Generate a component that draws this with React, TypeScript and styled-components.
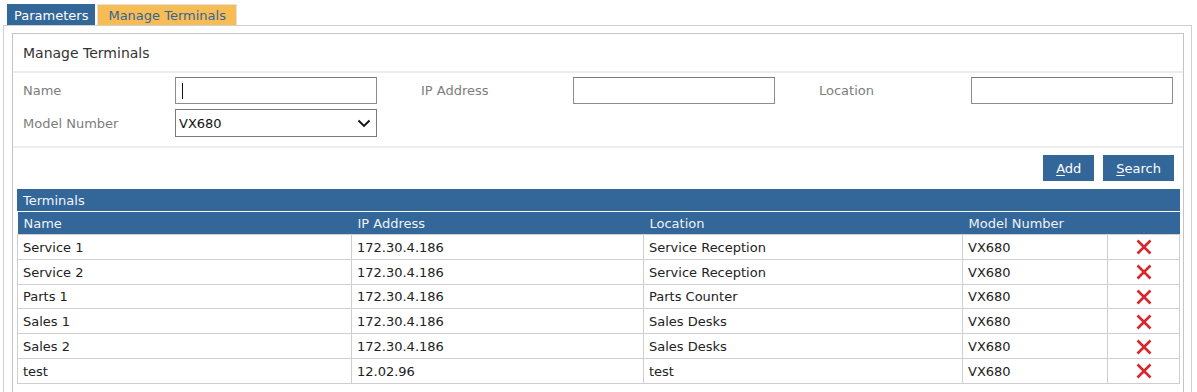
import styled, { createGlobalStyle } from 'styled-components';

const GlobalStyle = createGlobalStyle`
  body {
    margin: 0;
    background: #fff;
    font-family: Tahoma, 'DejaVu Sans', sans-serif;
    font-size: 13px;
    color: #222;
  }
`;

const BLUE = '#336699';

interface ITerminal {
  name: string;
  ip: string;
  location: string;
  model: string;
}

const terminals: ITerminal[] = [
  { name: 'Service 1', ip: '172.30.4.186', location: 'Service Reception', model: 'VX680' },
  { name: 'Service 2', ip: '172.30.4.186', location: 'Service Reception', model: 'VX680' },
  { name: 'Parts 1', ip: '172.30.4.186', location: 'Parts Counter', model: 'VX680' },
  { name: 'Sales 1', ip: '172.30.4.186', location: 'Sales Desks', model: 'VX680' },
  { name: 'Sales 2', ip: '172.30.4.186', location: 'Sales Desks', model: 'VX680' },
  { name: 'test', ip: '12.02.96', location: 'test', model: 'VX680' },
];

const DeleteIcon = () => (
  <svg width='16' height='16' viewBox='0 0 16 16'>
    <path d='M1.5 1.5 L14.5 14.5 M14.5 1.5 L1.5 14.5' stroke='#d7262c' strokeWidth='2.6' />
  </svg>
);

const App = () => {
  return (
    <Page>
      <GlobalStyle />
      <Tabs>
        <Tab>Parameters</Tab>
        <Tab $active>Manage Terminals</Tab>
      </Tabs>
      <Outer>
        <Inner>
          <Title>Manage Terminals</Title>
          <Form>
            <Field>
              <label>Name</label>
              <Caret>
                <input type='text' />
              </Caret>
            </Field>
            <Field>
              <label>IP Address</label>
              <input type='text' />
            </Field>
            <Field>
              <label>Location</label>
              <input type='text' />
            </Field>
            <Field>
              <label>Model Number</label>
              <Select>
                <span>VX680</span>
                <svg width='14' height='9' viewBox='0 0 14 9'>
                  <path d='M1.5 1.5 L7 7 L12.5 1.5' fill='none' stroke='#111' strokeWidth='1.8' />
                </svg>
              </Select>
            </Field>
          </Form>
          <Actions>
            <Button>
              <u>A</u>dd
            </Button>
            <Button>
              <u>S</u>earch
            </Button>
          </Actions>
          <Grid>
            <GridTitle>Terminals</GridTitle>
            <Table>
              <colgroup>
                <col style={{ width: 334 }} />
                <col style={{ width: 292 }} />
                <col style={{ width: 319 }} />
                <col style={{ width: 145 }} />
                <col />
              </colgroup>
              <thead>
                <tr>
                  <th>Name</th>
                  <th>IP Address</th>
                  <th>Location</th>
                  <th>Model Number</th>
                  <th />
                </tr>
              </thead>
              <tbody>
                {terminals.map(t => (
                  <tr key={t.name}>
                    <td>{t.name}</td>
                    <td>{t.ip}</td>
                    <td>{t.location}</td>
                    <td>{t.model}</td>
                    <td className='del'>
                      <DeleteIcon />
                    </td>
                  </tr>
                ))}
              </tbody>
            </Table>
          </Grid>
        </Inner>
      </Outer>
    </Page>
  );
};

const Page = styled.div`
  padding: 4px 5px 0 3px;
  height: 388px;
  overflow: hidden;
`;

const Tabs = styled.div`
  display: flex;
  gap: 2px;
  padding-left: 4px;
`;

const Tab = styled.div<{ $active?: boolean }>`
  height: 21px;
  line-height: 21px;
  padding: 0 ${p => (p.$active ? 10 : 6)}px;
  font-size: 13px;
  box-sizing: border-box;
  background: ${p => (p.$active ? '#f8bc55' : BLUE)};
  color: ${p => (p.$active ? BLUE : '#fff')};
  border: 1px solid ${p => (p.$active ? '#e2e2e2' : BLUE)};
  border-bottom: none;
`;

const Outer = styled.div`
  border: 1px solid #d0d0d0;
  border-bottom: none;
  padding: 7px 7px 0 8px;
  height: 400px;
`;

const Inner = styled.div`
  border: 1px solid #c4c4c4;
  border-bottom: none;
  padding: 0 3px 0 4px;
  height: 400px;
`;

const Title = styled.div`
  font-size: 14px;
  color: #333;
  padding: 11px 6px 0 10px;
  height: 26px;
  border-bottom: 2px solid #ececec;
  margin: 0 -3px 0 -4px;
`;

const Form = styled.div`
  display: grid;
  grid-template-columns: repeat(3, 398px);
  row-gap: 5px;
  padding: 4px 0 9px 10px;
  border-bottom: 2px solid #ececec;
  margin: 0 -3px 0 -4px;
`;

const Field = styled.div`
  display: flex;
  align-items: center;
  label {
    width: 152px;
    font-size: 13px;
    color: #7d7d7d;
  }
  input {
    width: 202px;
    height: 27px;
    box-sizing: border-box;
    border: 1px solid #8c8c8c;
    border-top-color: #7a7a7a;
    padding: 0 6px;
    font-family: inherit;
    font-size: 13px;
    outline: none;
  }
`;

const Caret = styled.div`
  position: relative;
  &::after {
    content: '';
    position: absolute;
    left: 7px;
    top: 6px;
    width: 1px;
    height: 16px;
    background: #111;
  }
`;

const Select = styled.div`
  width: 202px;
  height: 28px;
  box-sizing: border-box;
  border: 1px solid #7a7a7a;
  display: flex;
  align-items: center;
  justify-content: space-between;
  padding: 0 5px 0 3px;
  font-size: 13px;
  color: #111;
`;

const Actions = styled.div`
  display: flex;
  justify-content: flex-end;
  gap: 9px;
  padding: 7px 6px 0 0;
`;

const Button = styled.button`
  height: 26px;
  padding: 0 13px;
  background: ${BLUE};
  color: #fff;
  border: none;
  font-family: inherit;
  font-size: 13px;
  u {
    text-decoration-thickness: 1px;
    text-underline-offset: 2px;
  }
`;

const Grid = styled.div`
  margin-top: 8px;
  width: 1163px;
`;

const GridTitle = styled.div`
  background: ${BLUE};
  color: #f2f5f9;
  height: 22px;
  line-height: 23px;
  padding-left: 6px;
  font-size: 13px;
  border-bottom: 1px solid #fff;
`;

const Table = styled.table`
  width: 100%;
  border-collapse: collapse;
  table-layout: fixed;
  font-size: 13px;
  th {
    background: ${BLUE};
    color: #eef2f7;
    font-weight: normal;
    text-align: left;
    height: 21px;
    padding: 1px 6px 0;
  }
  td {
    border: 1px solid #cfcfcf;
    height: 22.8px;
    padding: 1px 5px 0;
    color: #222;
    white-space: nowrap;
  }
  td.del svg {
    display: block;
    margin: 0 auto;
  }
`;

export default App;
